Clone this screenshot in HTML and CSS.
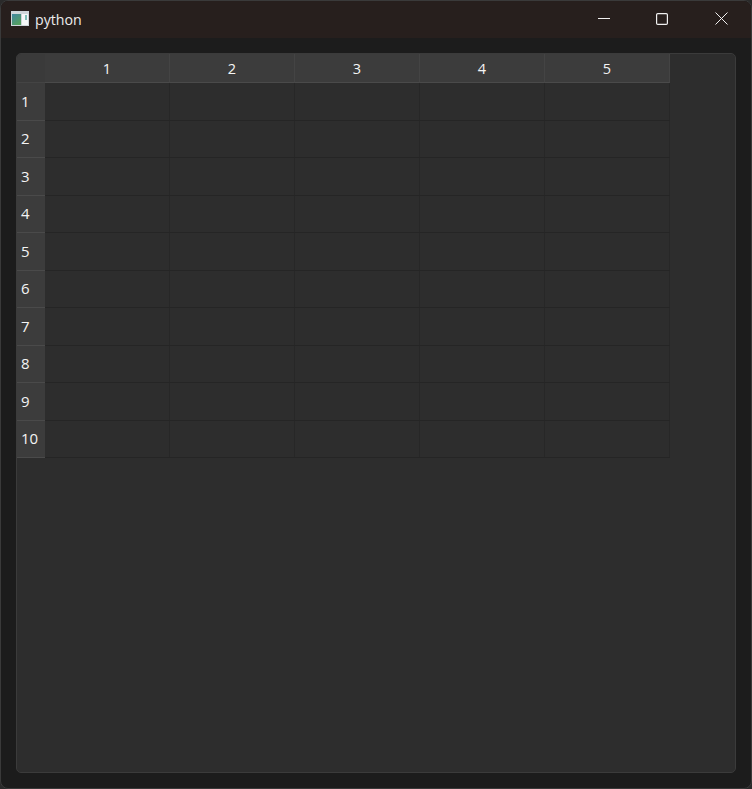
FILE: index.html
```html
<!DOCTYPE html>
<html lang="en">
<head>
<meta charset="utf-8">
<title>python</title>
<link rel="stylesheet" href="styles.css">
</head>
<body>
<div class="window">
  <header class="titlebar">
    <svg class="app-icon" width="18" height="15" viewBox="0 0 18 15">
      <defs><linearGradient id="g" x1="0" y1="0" x2="0.6" y2="1"><stop offset="0" stop-color="#3f86a0"/><stop offset="1" stop-color="#55a060"/></linearGradient></defs>
      <rect x="0" y="0" width="18" height="15" fill="#cfd6da"/>
      <rect x="1" y="3" width="9" height="11" fill="url(#g)"/>
      <rect x="11" y="3" width="6" height="11" fill="#f6f8f8"/>
      <rect x="14" y="4" width="2" height="5" fill="#7fbfb8"/>
    </svg>
    <span class="title">python</span>
    <div class="controls">
      <span class="ctl"><svg width="12" height="12" viewBox="0 0 12 12"><path d="M0 5.5H12" stroke="#f0f0f0" fill="none"/></svg></span>
      <span class="ctl ctl-max"><svg width="12" height="12" viewBox="0 0 12 12"><rect x="0.6" y="0.6" width="10.8" height="10.8" rx="1.2" stroke="#f0f0f0" stroke-width="1.2" fill="none"/></svg></span>
      <span class="ctl"><svg width="13" height="13" viewBox="0 0 13 13"><path d="M0.5 0.5L12.5 12.5M12.5 0.5L0.5 12.5" stroke="#f0f0f0" fill="none"/></svg></span>
    </div>
  </header>
  <main class="content">
    <div class="panel">
      <div class="table">
        <div class="hcell corner"></div>
        <div class="hcell col">1</div><div class="hcell col">2</div><div class="hcell col">3</div><div class="hcell col">4</div><div class="hcell col">5</div>

        <div class="hcell row">1</div><div class="cell"></div><div class="cell"></div><div class="cell"></div><div class="cell"></div><div class="cell"></div>
        <div class="hcell row">2</div><div class="cell"></div><div class="cell"></div><div class="cell"></div><div class="cell"></div><div class="cell"></div>
        <div class="hcell row">3</div><div class="cell"></div><div class="cell"></div><div class="cell"></div><div class="cell"></div><div class="cell"></div>
        <div class="hcell row">4</div><div class="cell"></div><div class="cell"></div><div class="cell"></div><div class="cell"></div><div class="cell"></div>
        <div class="hcell row">5</div><div class="cell"></div><div class="cell"></div><div class="cell"></div><div class="cell"></div><div class="cell"></div>
        <div class="hcell row">6</div><div class="cell"></div><div class="cell"></div><div class="cell"></div><div class="cell"></div><div class="cell"></div>
        <div class="hcell row">7</div><div class="cell"></div><div class="cell"></div><div class="cell"></div><div class="cell"></div><div class="cell"></div>
        <div class="hcell row">8</div><div class="cell"></div><div class="cell"></div><div class="cell"></div><div class="cell"></div><div class="cell"></div>
        <div class="hcell row">9</div><div class="cell"></div><div class="cell"></div><div class="cell"></div><div class="cell"></div><div class="cell"></div>
        <div class="hcell row">10</div><div class="cell"></div><div class="cell"></div><div class="cell"></div><div class="cell"></div><div class="cell"></div>
      </div>
    </div>
  </main>
</div>
</body>
</html>
```
FILE: styles.css
```css
* { box-sizing: border-box; }
html, body { margin: 0; height: 100%; background: #2a2a2a; overflow: hidden; }
body { font-family: "Open Sans", "Noto Sans", sans-serif; color: #f2f2f2; }

.window {
  width: 752px;
  height: 789px;
  display: flex;
  flex-direction: column;
  background: #1c1c1c;
  border: 1px solid #3a3a3a;
  border-radius: 8px;
  overflow: hidden;
}

.titlebar {
  height: 37px;
  flex: none;
  display: flex;
  align-items: center;
  padding-left: 10px;
  background: #271f1d;
}
.app-icon { flex: none; margin-top: -2px; }
.title { margin-left: 6px; font-size: 14.2px; color: #ececec; margin-top: -1px; }
.controls { margin-left: auto; display: flex; margin-top: -2px; }
.ctl { width: 59px; height: 30px; display: flex; align-items: center; justify-content: center; }
.ctl-max { padding-right: 2px; }

.content { flex: 1; padding: 15px 15px 15px 15px; min-height: 0; }

.panel {
  height: 100%;
  background: #2d2d2d;
  border: 1px solid #3b3b3b;
  border-radius: 5px;
  overflow: hidden;
}

.table {
  display: grid;
  grid-template-columns: 29px repeat(5, 125px);
  grid-template-rows: 29px repeat(10, 37.5px);
  width: max-content;
  margin-top: 0;
  margin-left: -1px;
}

.hcell {
  display: flex;
  align-items: center;
  justify-content: center;
  background: #3c3c3c;
  font-size: 14.5px;
  color: #f4f4f4;
}
.corner { background: #3a3a3a; border-bottom: 1px solid #444; }
.col { border-right: 1px solid #444; border-bottom: 1px solid #4a4a4a; }
.row {
  justify-content: flex-start;
  padding-left: 5px;
  font-size: 15px;
  border-bottom: 1px solid #4a4a4a;
  padding-bottom: 1px;
}
.cell {
  background: #2d2d2d;
  border-right: 1px solid #272727;
  border-bottom: 1px solid #252525;
}
```
